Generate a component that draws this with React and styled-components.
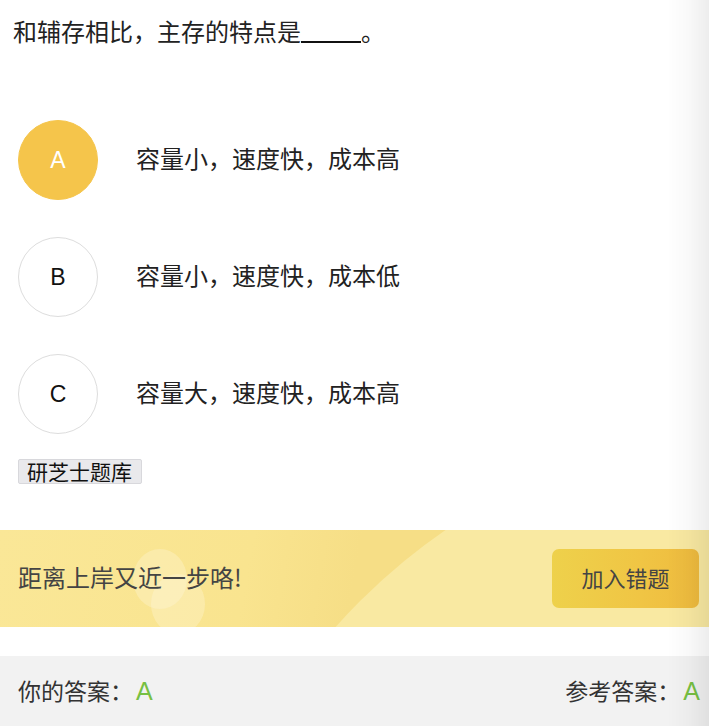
import React from "react";
import styled, { createGlobalStyle } from "styled-components";

const Global = createGlobalStyle`
  html, body { margin: 0; padding: 0; background: #fff; }
  body { font-family: "Noto Sans CJK SC", "Noto Sans", sans-serif; color: #222; }
  * { box-sizing: border-box; }
`;

const Page = styled.div`
  position: relative;
  width: 709px;
  min-height: 726px;
  overflow: hidden;
`;

const Question = styled.div`
  padding: 13px 13px 0;
  height: 51px;
  font-size: 24px;
  line-height: 36px;
  color: #222;
`;

const Blank = styled.span`
  display: inline-block;
  width: 60px;
  height: 22px;
  border-bottom: 2px solid #111;
  vertical-align: -2px;
`;

const Options = styled.div`
  display: flex;
  flex-direction: column;
  gap: 37px;
  margin-top: 69px;
  padding-left: 18px;
`;

const Option = styled.div`
  display: flex;
  align-items: center;
  height: 80px;
  gap: 38px;
`;

const Circle = styled.div`
  width: 80px;
  height: 80px;
  flex: none;
  border-radius: 50%;
  display: flex;
  align-items: center;
  justify-content: center;
  font-family: "Liberation Sans", Arial, sans-serif;
  font-size: 23px;
  color: ${(p) => (p.$active ? "#fff" : "#111")};
  background: ${(p) => (p.$active ? "#f5c54b" : "#fff")};
  border: 1px solid ${(p) => (p.$active ? "#f5c54b" : "#dddddd")};
`;

const OptionText = styled.div`
  font-size: 24px;
  line-height: 30px;
  padding-bottom: 5px;
  color: #222;
`;

const Tag = styled.span`
  display: inline-flex;
  align-items: center;
  height: 25px;
  margin: 25px 0 0 18px;
  padding: 0 9px 0 8px;
  background: #e9e9ec;
  border: 1px solid #d8d8dc;
  border-radius: 2px;
  font-size: 21px;
  line-height: 21px;
  color: #111;
`;

const Banner = styled.div`
  position: relative;
  overflow: hidden;
  margin-top: 45px;
  height: 97px;
  padding: 0 10px 0 18px;
  display: flex;
  align-items: center;
  justify-content: space-between;
  background: linear-gradient(100deg, #fae797 0%, #f9e48f 35%, #f6de86 50%);
`;

const Arc = styled.div`
  position: absolute;
  left: 182px;
  top: -107px;
  width: 1216px;
  height: 1216px;
  border-radius: 50%;
  background: #f9e9a2;
`;

const Bubble = styled.div`
  position: absolute;
  left: ${(p) => p.$x}px;
  top: ${(p) => p.$y}px;
  width: 54px;
  height: 60px;
  border-radius: 50%;
  background: rgba(255, 250, 225, 0.3);
`;

const BannerText = styled.div`
  position: relative;
  font-size: 24px;
  line-height: 30px;
  padding-bottom: 3px;
  color: #444;
`;

const AddButton = styled.button`
  position: relative;
  width: 147px;
  height: 59px;
  padding: 0 0 4px;
  border: none;
  border-radius: 7px;
  background: linear-gradient(90deg, #eed14b 0%, #f0c544 60%, #efbb3e 100%);
  font-family: inherit;
  font-size: 22px;
  color: #444;
  cursor: pointer;
`;

const Footer = styled.div`
  margin-top: 29px;
  height: 71px;
  background: #f2f2f2;
  display: flex;
  align-items: center;
  justify-content: space-between;
  padding: 0 9px 4px 18px;
  font-size: 23px;
  color: #333;
`;

const Green = styled.span`
  font-family: "Liberation Sans", Arial, sans-serif;
  font-size: 25px;
  color: #77c043;
  margin-left: 3px;
`;

const EdgeShade = styled.div`
  position: fixed;
  top: 0;
  right: 0;
  bottom: 0;
  width: 42px;
  pointer-events: none;
  background: linear-gradient(90deg, rgba(0, 0, 0, 0) 0%, rgba(0, 0, 0, 0.025) 50%, rgba(0, 0, 0, 0.07) 100%);
`;

const options = [
  { key: "A", text: "容量小，速度快，成本高", active: true },
  { key: "B", text: "容量小，速度快，成本低" },
  { key: "C", text: "容量大，速度快，成本高" },
];

export default function App() {
  return (
    <Page>
      <Global />
      <Question>
        和辅存相比，主存的特点是<Blank />。
      </Question>
      <Options>
        {options.map((o) => (
          <Option key={o.key}>
            <Circle $active={o.active}>{o.key}</Circle>
            <OptionText>{o.text}</OptionText>
          </Option>
        ))}
      </Options>
      <Tag>研芝士题库</Tag>
      <Banner>
        <Arc />
        <Bubble $x={133} $y={19} />
        <Bubble $x={151} $y={44} />
        <BannerText>距离上岸又近一步咯!</BannerText>
        <AddButton>加入错题</AddButton>
      </Banner>
      <Footer>
        <div>
          你的答案：<Green>A</Green>
        </div>
        <div>
          参考答案：<Green>A</Green>
        </div>
      </Footer>
      <EdgeShade />
    </Page>
  );
}
